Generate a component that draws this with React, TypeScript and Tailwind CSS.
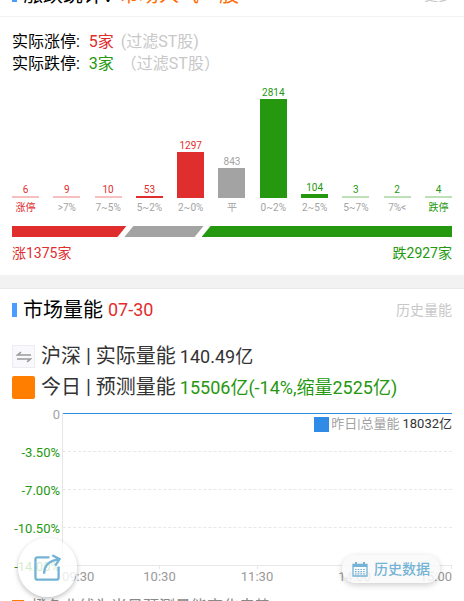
import React from 'react'

type Tone = 'up' | 'flat' | 'down'

const bars: { label: string; count: number; tone: Tone }[] = [
  { label: '涨停', count: 6, tone: 'up' },
  { label: '>7%', count: 9, tone: 'up' },
  { label: '7~5%', count: 10, tone: 'up' },
  { label: '5~2%', count: 53, tone: 'up' },
  { label: '2~0%', count: 1297, tone: 'up' },
  { label: '平', count: 843, tone: 'flat' },
  { label: '0~2%', count: 2814, tone: 'down' },
  { label: '2~5%', count: 104, tone: 'down' },
  { label: '5~7%', count: 3, tone: 'down' },
  { label: '7%<', count: 2, tone: 'down' },
  { label: '跌停', count: 4, tone: 'down' },
]

const textTone = { up: 'text-[#e02d2d]', flat: 'text-[#a3a3a3]', down: 'text-[#25980f]' }
const barTone = { up: 'bg-[#e02d2d]', flat: 'bg-[#a3a3a3]', down: 'bg-[#25980f]' }

const maxCount = 2814
const maxHeight = 99

const yLabels = ['0', '-3.50%', '-7.00%', '-10.50%', '-14.00%']
const xLabels = [
  { time: '09:30', cell: 'w-1/8 text-left' },
  { time: '10:30', cell: 'w-1/4 text-center' },
  { time: '11:30', cell: 'w-1/4 text-center' },
  { time: '14:00', cell: 'w-1/4 text-center' },
  { time: '15:00', cell: 'w-1/8 text-right' },
]

const BarChart = () => (
  <div className="flex items-end justify-between h-[128px] text-[10px] leading-[12px]">
    {bars.map((bar) => {
      const height = Math.round((bar.count / maxCount) * maxHeight)
      return (
        <div key={bar.label} className="flex flex-col items-center w-[27px] whitespace-nowrap">
          <span className={textTone[bar.tone]}>{bar.count}</span>
          <div
            className={`w-full ${barTone[bar.tone]} ${height < 1 ? 'opacity-30' : ''}`}
            style={{ height: Math.max(height, 2) }}
          />
          <span
            className={`mt-1 ${bar.label.endsWith('停') ? textTone[bar.tone] : 'text-[#a3a3a3]'}`}
          >
            {bar.label}
          </span>
        </div>
      )
    })}
  </div>
)

const RatioBar = () => (
  <div className="flex h-[11px] mt-3">
    <div className="w-[26%] bg-[#e02d2d] [clip-path:polygon(0_0,100%_0,calc(100%-9px)_100%,0_100%)]" />
    <div className="w-[18%] -ml-[2px] bg-[#a3a3a3] [clip-path:polygon(9px_0,100%_0,calc(100%-9px)_100%,0_100%)]" />
    <div className="flex-1 -ml-[2px] bg-[#25980f] [clip-path:polygon(9px_0,100%_0,100%_100%,0_100%)]" />
  </div>
)

const SwapIcon = () => (
  <span className="flex items-center justify-center size-[23px] bg-[#f8f8fd] border border-[#ececf2]">
    <svg viewBox="0 0 16 12" className="w-4 h-3" fill="none" stroke="#999" strokeWidth="1.6">
      <path d="M15 4H1.5L5 1.2M1 8h13.500L11 10.800" />
    </svg>
  </span>
)

const VolumeChart = () => (
  <div className="flex mt-[10px] text-[13px]">
    <div className="w-[48px] shrink-0">
      {yLabels.map((label, i) => (
        <p
          key={label}
          className={`h-[38px] last:h-4 leading-4 -translate-y-1.5 text-right ${i === 0 ? 'text-[#a3a3a3]' : 'text-[#25980f]'}`}
        >
          {label}
        </p>
      ))}
    </div>
    <div className="relative flex-1 ml-[2px]">
      <div className="border-l border-[#e6e6e6]">
        <div className="h-[39px] border-t border-t-[#2f8be6] border-b border-b-[#e8e8e8] border-dashed [border-top-style:solid]" />
        <div className="h-[38px] border-b border-dashed border-[#e8e8e8]" />
        <div className="h-[38px] border-b border-dashed border-[#e8e8e8]" />
        <div className="h-[38px] border-b border-[#e8e8e8]" />
        <div className="grid grid-cols-4 h-[3px]">
          <span className="border-r border-[#e8e8e8]" />
          <span className="border-r border-[#e8e8e8]" />
          <span className="border-r border-[#e8e8e8]" />
          <span className="border-r border-[#e8e8e8]" />
        </div>
      </div>
      <div className="flex leading-4 text-[#999]">
        {xLabels.map(({ time, cell }) => (
          <span key={time} className={`${cell} whitespace-nowrap`}>{time}</span>
        ))}
      </div>
      <div className="absolute right-0 top-[3px] flex items-center leading-4 whitespace-nowrap">
        <span className="size-[15px] mr-[2px] bg-[#2f8be6]" />
        <span className="text-[#a3a3a3]">昨日|总量能</span>
        <span className="ml-[3px] text-[#333]">18032亿</span>
      </div>
    </div>
  </div>
)

const ShareButton = () => (
  <button
    aria-label="分享"
    className="absolute left-[18px] bottom-1 flex items-center justify-center size-[59px] rounded-full bg-white/80 shadow-[0_2px_5px_rgba(0,0,0,0.25)]"
  >
    <svg viewBox="0 0 28 28" className="size-[27px]" fill="none" stroke="#74b3d6" strokeWidth="2.4">
      <path d="M16 3.5H3.5a2 2 0 0 0-2 2v19a2 2 0 0 0 2 2h20a2 2 0 0 0 2-2V13" />
      <path d="M10.500 20.500C10.500 12 15 7 25.500 5.500M19 1.200 26.500 5.300 22 12" />
    </svg>
  </button>
)

const HistoryButton = () => (
  <button className="absolute right-6 bottom-[18px] flex items-center gap-[6px] h-7 px-[10px] rounded-full bg-[#f9f9f9]/85 shadow-[0_2px_6px_rgba(0,0,0,0.2)] text-sm font-medium text-[#74b3d6]">
    <svg viewBox="0 0 16 15" className="w-4 h-[15px]" fill="none" stroke="#74b3d6">
      <path d="M1 2.500h14v11.500H1z" strokeWidth="1.300" />
      <path d="M1 3.500h14" strokeWidth="3" />
      <path d="M4 0v3M12 0v3" strokeWidth="2" />
      <path d="M3 7.500h10M3 9.700h10M3 11.900h10" strokeWidth="1.200" strokeDasharray="1.600 1.100" />
    </svg>
    历史数据
  </button>
)

export default function App() {
  return (
    <div className="relative h-screen overflow-hidden bg-white font-['Roboto','Noto_Sans_CJK_SC',sans-serif]">
      <header className="flex items-end h-[17px] px-3 pb-[11px] overflow-hidden border-b border-[#f2f2f2] text-xl leading-5 whitespace-nowrap">
        <span className="w-[5px] h-[14px] mb-[3px] bg-[#4a9cff]" />
        <h2 className="ml-[6px] text-black">涨跌统计：</h2>
        <span className="-ml-1 text-[#ff6a00]">市场人气一股</span>
        <a href="#more" className="ml-auto mb-[2px] text-sm leading-4 text-[#c8c8c8]">更多</a>
      </header>

      <section className="px-3 pt-[14px] pb-3">
        <div className="text-base leading-[22px] text-black">
          <p>实际涨停: <span className="ml-[5px] text-[#e02d2d]">5家</span> <span className="ml-[3px] text-[#c8c8c8]">(过滤ST股)</span></p>
          <p>实际跌停: <span className="ml-[5px] text-[#25980f]">3家</span> <span className="ml-[3px] text-[#c8c8c8]">（过滤ST股）</span></p>
        </div>
        <div className="mt-[11px]">
          <BarChart />
        </div>
        <RatioBar />
        <div className="flex justify-between mt-[6px] text-sm leading-5">
          <span className="text-[#e02d2d]">涨1375家</span>
          <span className="text-[#25980f]">跌2927家</span>
        </div>
      </section>

      <div className="h-[14px] bg-[#f2f2f2] border-b border-[#e8e8e8]" />

      <section className="px-3 pt-[7px]">
        <div className="flex items-center leading-7">
          <span className="w-[5px] h-[14px] bg-[#4a9cff]" />
          <h2 className="ml-[6px] text-xl leading-7 text-black">市场量能</h2>
          <span className="ml-[5px] text-lg leading-7 text-[#e02d2d]">07-30</span>
          <a href="#history" className="ml-auto text-sm text-[#c8c8c8]">历史量能</a>
        </div>

        <div className="mt-[17px] text-lg leading-[31px] text-[#333]">
          <div className="flex items-center">
            <SwapIcon />
            <span className="ml-[6px] text-xl leading-[31px]">沪深 | 实际量能</span>
            <span className="ml-1">140.49亿</span>
          </div>
          <div className="flex items-center">
            <span className="size-[23px] rounded-xs bg-[#ff7e00]" />
            <span className="ml-[6px] text-xl leading-[31px]">今日 | 预测量能</span>
            <span className="ml-1 text-[#25980f]">15506亿(-14%,缩量2525亿)</span>
          </div>
        </div>

        <VolumeChart />

        <div className="flex items-center mt-3 text-base leading-5 text-[#888] whitespace-nowrap">
          <span className="w-3 h-[14px] mr-[7px] bg-[#ff7e00]" />
          橙色曲线为当日预测量能变化走势
        </div>
      </section>

      <ShareButton />
      <HistoryButton />
    </div>
  )
}
